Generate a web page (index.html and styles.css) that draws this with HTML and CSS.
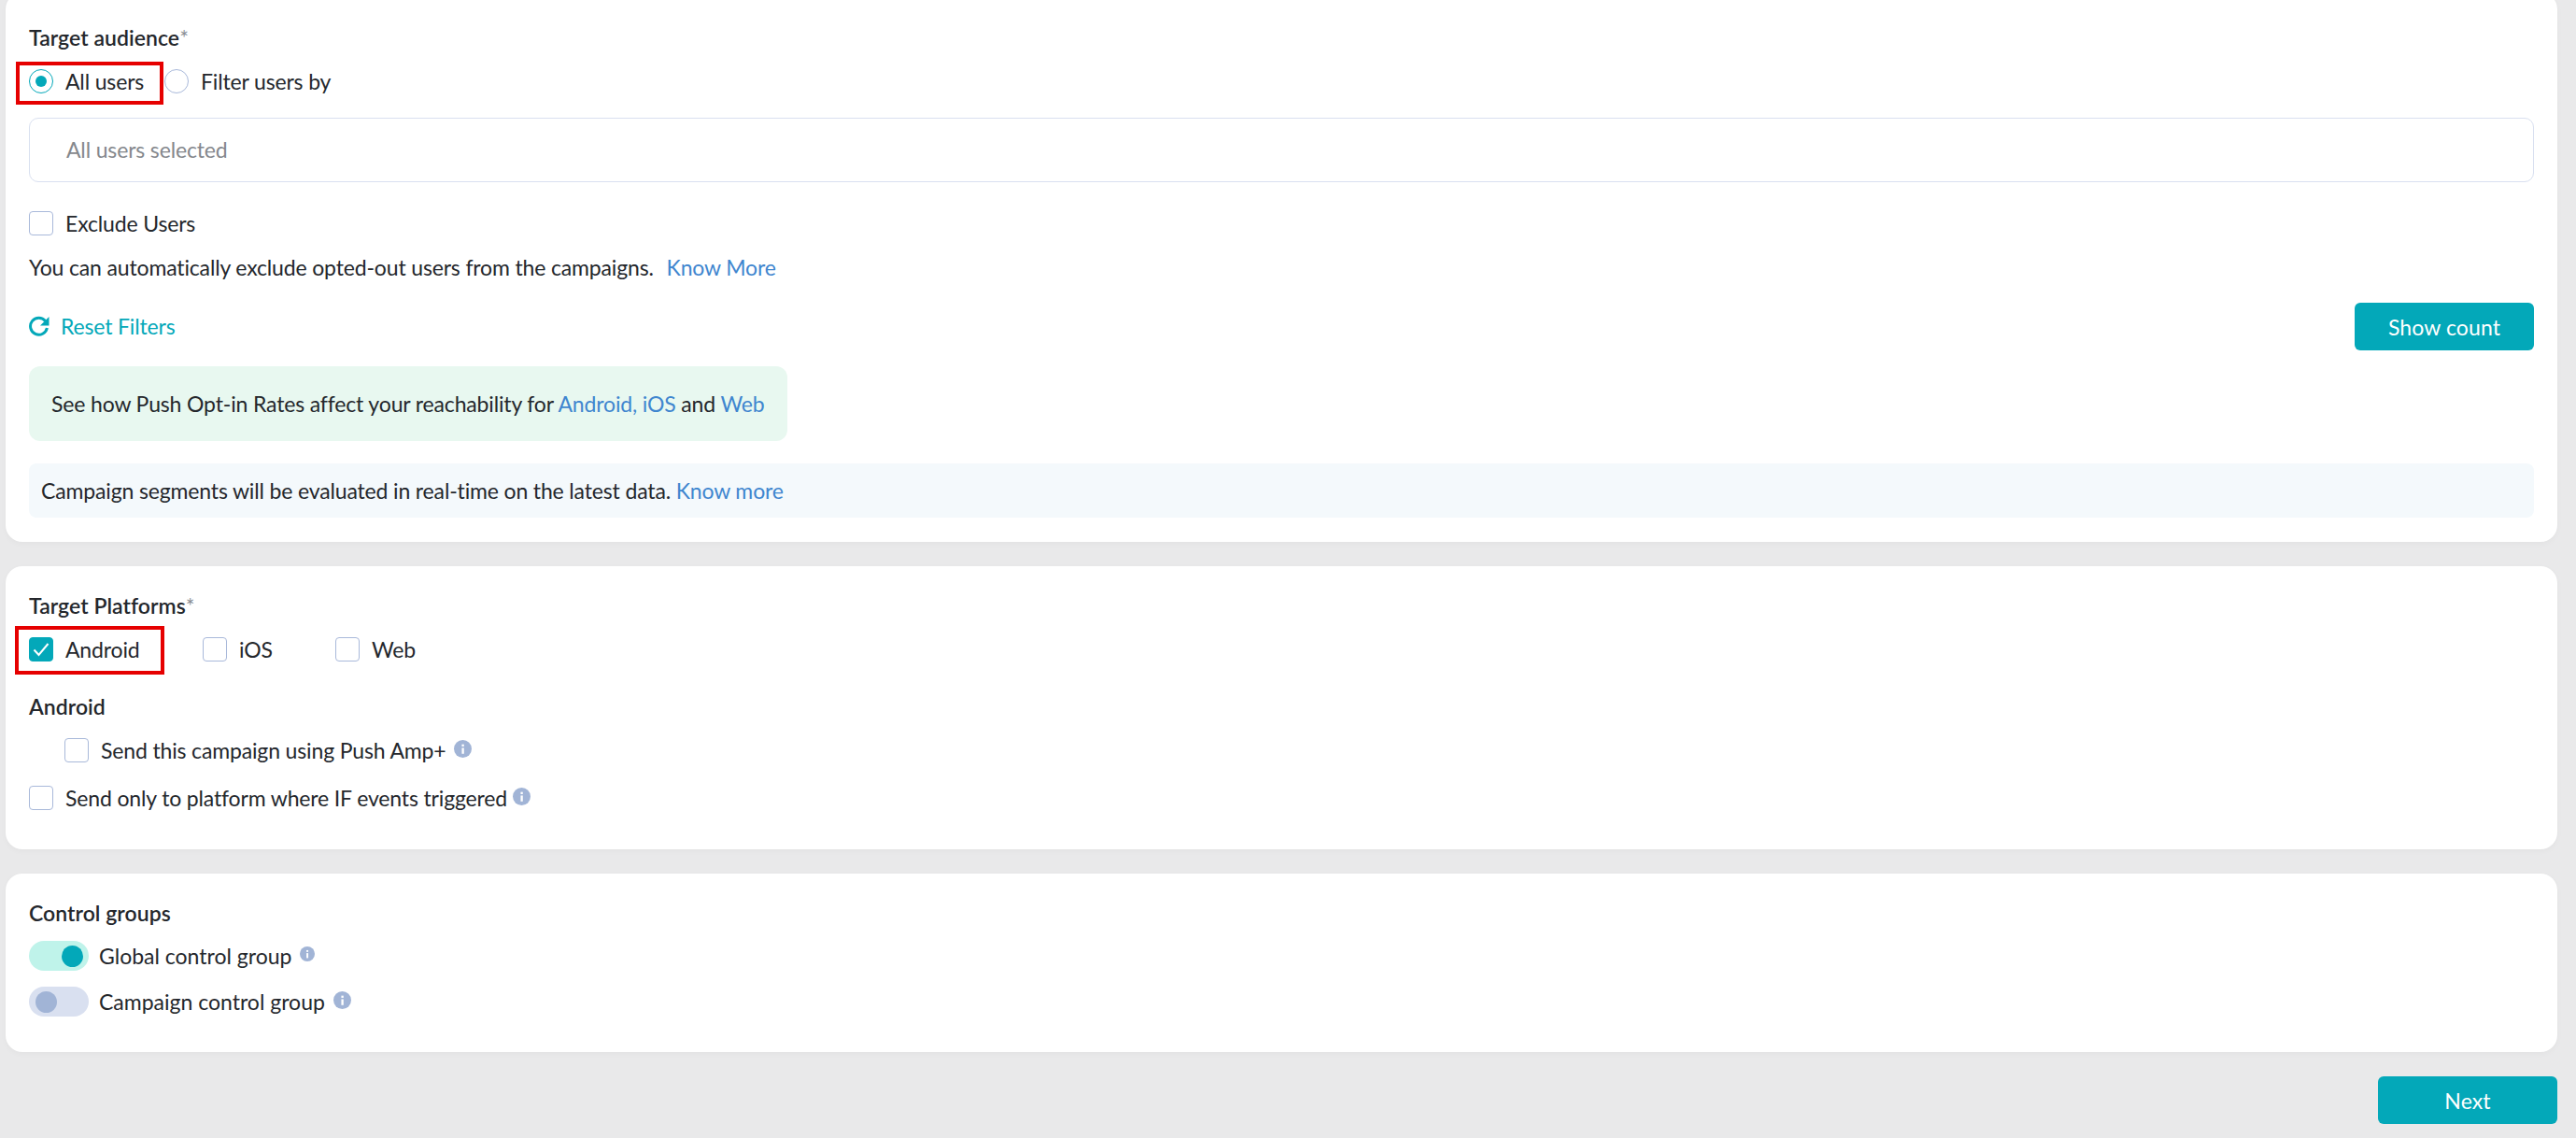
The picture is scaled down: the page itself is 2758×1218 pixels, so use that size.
FILE: index.html
```html
<!DOCTYPE html>
<html lang="en">
<head>
<meta charset="utf-8">
<title>Campaign</title>
<link rel="stylesheet" href="styles.css">
</head>
<body>
<main class="page">
  <section class="card card-audience">
    <h2 class="title">Target audience<span class="req">*</span></h2>
    <div class="radios">
      <label class="opt opt-all"><span class="radio on"></span>All users<span class="mark mark-all"></span></label>
      <label class="opt"><span class="radio"></span>Filter users by</label>
    </div>
    <div class="input">All users selected</div>
    <label class="opt exclude"><span class="box"></span>Exclude Users</label>
    <p class="note">You can automatically exclude opted-out users from the campaigns. <a class="link know" href="#">Know More</a></p>
    <div class="actions">
      <a class="reset" href="#"><svg class="reset-ico" viewBox="0 0 22 22" aria-hidden="true"><path d="M17.6 5.6A9 9 0 1 0 19.4 13" fill="none" stroke="#03a8b9" stroke-width="3"/><path d="M21.5 1v9.5h-9.5z" fill="#03a8b9"/></svg>Reset Filters</a>
      <button class="btn">Show count</button>
    </div>
    <div class="green">See how Push Opt-in Rates affect your reachability for <a class="link" href="#">Android, iOS</a> and <a class="link" href="#">Web</a></div>
    <div class="blue">Campaign segments will be evaluated in real-time on the latest data. <a class="link" href="#">Know more</a></div>
  </section>

  <section class="card card-platforms">
    <h2 class="title">Target Platforms<span class="req">*</span></h2>
    <div class="platforms">
      <label class="opt opt-android"><span class="box checked"><svg viewBox="0 0 24 24" aria-hidden="true"><path d="M4.5 12.5l5 5.5 10-12" fill="none" stroke="#fff" stroke-width="2"/></svg></span>Android<span class="mark mark-android"></span></label>
      <label class="opt opt-ios"><span class="box"></span>iOS</label>
      <label class="opt"><span class="box"></span>Web</label>
    </div>
    <h3 class="sub">Android</h3>
    <label class="opt amp"><span class="box"></span>Send this campaign using Push Amp+<svg class="info" viewBox="0 0 18 18" aria-hidden="true"><circle cx="9" cy="9" r="9" fill="#a1b4d6"/><rect x="8" y="8" width="2.2" height="6" fill="#fff"/><rect x="8" y="4.4" width="2.2" height="2.2" fill="#fff"/></svg></label>
    <label class="opt only"><span class="box"></span>Send only to platform where IF events triggered<svg class="info info-tight" viewBox="0 0 18 18" aria-hidden="true"><circle cx="9" cy="9" r="9" fill="#a1b4d6"/><rect x="8" y="8" width="2.2" height="6" fill="#fff"/><rect x="8" y="4.4" width="2.2" height="2.2" fill="#fff"/></svg></label>
  </section>

  <section class="card card-control">
    <h2 class="title">Control groups</h2>
    <div class="tog-row"><span class="toggle on"><i></i></span>Global control group<svg class="info info-sm" viewBox="0 0 18 18" aria-hidden="true"><circle cx="9" cy="9" r="9" fill="#a1b4d6"/><rect x="8" y="8" width="2.2" height="6" fill="#fff"/><rect x="8" y="4.4" width="2.2" height="2.2" fill="#fff"/></svg></div>
    <div class="tog-row second"><span class="toggle"><i></i></span>Campaign control group<svg class="info" viewBox="0 0 18 18" aria-hidden="true"><circle cx="9" cy="9" r="9" fill="#a1b4d6"/><rect x="8" y="8" width="2.2" height="6" fill="#fff"/><rect x="8" y="4.4" width="2.2" height="2.2" fill="#fff"/></svg></div>
  </section>

  <div class="foot"><button class="btn">Next</button></div>
</main>
</body>
</html>
```
FILE: styles.css
```css
* { box-sizing: border-box; }
html, body { margin: 0; height: 100%; }
body {
  background: #e9e9ea;
  color: #24272c;
  font-family: Lato, "Noto Sans", sans-serif;
  font-size: 23px;
  letter-spacing: -0.15px;
  overflow: hidden;
}
.page { padding: 0 20px 0 6px; display: flex; flex-direction: column; gap: 26px; height: 1218px; }
.card {
  background: #fff;
  border-radius: 18px;
  padding: 0 25px;
  box-shadow: 0 2px 6px rgba(0,0,0,.03);
}
.card-audience { height: 588px; margin-top: -8px; padding-top: 35px; }
.card-platforms { height: 303px; padding-top: 29px; }
.card-control { height: 191px; padding-top: 29px; }
.title { margin: 0; font-size: 23px; line-height: 26px; font-weight: 600; letter-spacing: 0.05px; }
.req { color: #8b8f96; font-weight: 400; }
.opt { display: flex; align-items: center; position: relative; line-height: 26px; }
.radios { display: flex; margin-top: 21px; height: 26px; }
.opt-all { width: 145px; }
.radio { width: 26px; height: 26px; border: 1px solid #a9b9da; border-radius: 50%; margin-right: 13px; position: relative; flex: none; }
.radio.on { border-color: #03a8b9; }
.radio.on::after { content: ""; position: absolute; inset: 6px; border-radius: 50%; background: #03a8b9; }
.mark { position: absolute; border: 4px solid #e60000; }
.mark-all { left: -14px; top: -8px; width: 158px; height: 46px; }
.mark-android { left: -15px; top: -12px; width: 160px; height: 52px; }
.input {
  margin-top: 26px; height: 69px; border: 1px solid #d9e0f0; border-radius: 10px;
  padding-left: 39px; line-height: 67px; color: #85888d;
}
.box { width: 26px; height: 26px; border: 1px solid #a9b9da; border-radius: 4px; margin-right: 13px; flex: none; display: block; }
.box.checked { background: #03a8b9; border-color: #03a8b9; }
.box.checked svg { display: block; width: 24px; height: 24px; }
.exclude { margin-top: 31px; }
.note { margin: 21px 0 0; line-height: 26px; }
.link { color: #3f86cf; text-decoration: none; }
.know { margin-left: 8px; }
.actions { display: flex; align-items: center; justify-content: space-between; margin-top: 25px; }
.reset { display: flex; align-items: center; color: #03a8b9; text-decoration: none; margin-bottom: 2px; }
.reset-ico { width: 22px; height: 22px; margin-right: 12px; }
.btn {
  width: 192px; height: 51px; background: #03a8b9; color: #fff; border: 0; border-radius: 6px;
  font: inherit; letter-spacing: 0.1px; padding: 0;
}
.green {
  margin-top: 17px; width: 812px; height: 80px; background: #e8f8f0; border-radius: 12px;
  padding-left: 24px; line-height: 80px;
}
.blue {
  margin-top: 24px; height: 58px; background: #f4f9fc; border-radius: 8px;
  padding-left: 13px; line-height: 58px;
}
.platforms { display: flex; margin-top: 21px; }
.opt-android { width: 186px; }
.opt-ios { width: 142px; }
.sub { margin: 35px 0 0; font-size: 23px; line-height: 26px; font-weight: 600; letter-spacing: 0.05px; }
.amp { margin: 21px 0 0 38px; }
.only { margin-top: 25px; }
.info { width: 19px; height: 19px; margin-left: 9px; flex: none; position: relative; top: -2px; }
.info-tight { margin-left: 6px; }
.info-sm { width: 16px; height: 16px; }
.tog-row { display: flex; align-items: center; margin-top: 17px; height: 32px; letter-spacing: 0; }
.toggle { width: 64px; height: 32px; border-radius: 16px; background: #d9e0f0; margin-right: 11px; position: relative; flex: none; }
.toggle i { position: absolute; top: 5px; left: 7px; width: 23px; height: 23px; border-radius: 50%; background: #a1b4d6; }
.toggle.on { background: #bff3ea; }
.toggle.on i { left: 35px; background: #03a8b9; }
.foot { display: flex; justify-content: flex-end; }
```
